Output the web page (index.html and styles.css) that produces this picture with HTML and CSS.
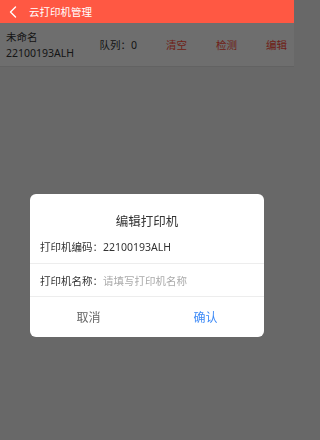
FILE: index.html
```html
<!DOCTYPE html>
<html lang="zh-CN">
<head>
<meta charset="utf-8">
<title>云打印机管理</title>
<link rel="stylesheet" href="styles.css">
</head>
<body>
<header class="topbar">
  <svg class="back" width="8" height="12" viewBox="0 0 8 12"><path d="M6.5 1 L1.5 6 L6.5 11" fill="none" stroke="#fff" stroke-width="1.4" stroke-linecap="round" stroke-linejoin="round"/></svg>
  <span class="title">云打印机管理</span>
</header>
<main class="list">
  <div class="item">
    <div class="info">
      <div class="name">未命名</div>
      <div class="code">22100193ALH</div>
    </div>
    <div class="actions">
      <span class="queue">队列：0</span>
      <span class="act">清空</span>
      <span class="act">检测</span>
      <span class="act">编辑</span>
    </div>
  </div>
</main>
<div class="mask">
  <div class="dialog">
    <div class="d-title">编辑打印机</div>
    <div class="row">
      <span class="label">打印机编码：</span><span class="value">22100193ALH</span>
    </div>
    <div class="row">
      <span class="label">打印机名称：</span><span class="placeholder">请填写打印机名称</span>
    </div>
    <div class="btns">
      <span class="btn cancel">取消</span>
      <span class="btn ok">确认</span>
    </div>
  </div>
</div>
</body>
</html>
```
FILE: styles.css
```css
* { box-sizing: border-box; }
html { background: #f0f0f0; }
html, body { margin: 0; padding: 0; }
body {
  width: 294px;
  height: 440px;
  background: #f0f0f0;
  font-family: "Noto Sans", "Noto Sans CJK SC", sans-serif;
  color: #333;
  overflow: hidden;
}
.topbar {
  position: relative;
  z-index: 20;
  height: 23px;
  background: #ff5843;
  display: flex;
  align-items: center;
  padding-left: 9px;
  color: #fff;
}
.back { display: block; margin-right: 12px; }
.title { font-size: 10.5px; line-height: 14px; }
.list { background: #fff; }
.item {
  height: 44px;
  display: flex;
  align-items: center;
  justify-content: space-between;
  padding: 0 7px 0 6px;
  border-bottom: 1px solid #e4e4e4;
  font-size: 10.5px;
}
.info { display: flex; flex-direction: column; gap: 1px; line-height: 15px; padding-top: 1px; }
.actions { display: flex; gap: 29px; align-items: center; }
.queue { color: #333; }
.act { color: #ff4a36; }
.mask {
  position: fixed;
  inset: 0;
  z-index: 10;
  background: rgba(0, 0, 0, 0.57);
  display: flex;
  justify-content: flex-start;
  align-items: flex-start;
  padding: 194px 0 0 30px;
}
.dialog {
  width: 234px;
  background: #fff;
  border-radius: 6px;
  overflow: hidden;
}
.d-title {
  padding-top: 20px;
  line-height: 16px;
  font-size: 12.5px;
  text-align: center;
  color: #333;
}
.row {
  display: flex;
  align-items: center;
  padding: 0 10px;
  font-size: 10.5px;
  height: 34px;
  border-bottom: 1px solid #ededed;
}
.row + .row { height: 33px; }
.placeholder { color: #aaa; }
.btns {
  display: flex;
  height: 40px;
}
.btn {
  flex: 1;
  display: flex;
  align-items: center;
  justify-content: center;
  font-size: 12px;
}
.cancel { color: #666; }
.ok { color: #3d8af7; }
```
